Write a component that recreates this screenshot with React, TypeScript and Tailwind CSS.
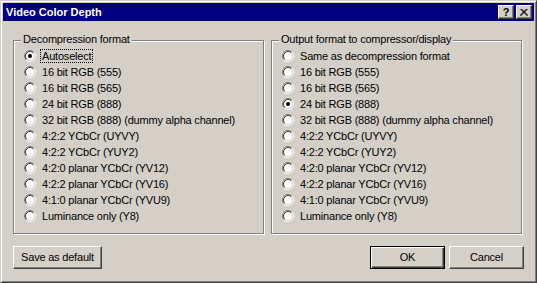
const decompression = [
  "Autoselect",
  "16 bit RGB (555)",
  "16 bit RGB (565)",
  "24 bit RGB (888)",
  "32 bit RGB (888) (dummy alpha channel)",
  "4:2:2 YCbCr (UYVY)",
  "4:2:2 YCbCr (YUY2)",
  "4:2:0 planar YCbCr (YV12)",
  "4:2:2 planar YCbCr (YV16)",
  "4:1:0 planar YCbCr (YVU9)",
  "Luminance only (Y8)",
];

const output = ["Same as decompression format", ...decompression.slice(1)];

// classic 12x12 radio button
const Radio = ({ checked }: { checked: boolean }) => (
  <svg width="12" height="12" viewBox="0 0 12 12" className="shrink-0">
    <circle cx="6" cy="6" r="4.5" fill="#fff" />
    <path d="M2.11 9.89 A5.5 5.5 0 0 1 9.89 2.11" fill="none" stroke="#808080" strokeWidth="1" />
    <path d="M9.89 2.11 A5.5 5.5 0 0 1 2.11 9.89" fill="none" stroke="#fff" strokeWidth="1" />
    <path d="M2.82 9.18 A4.5 4.5 0 0 1 9.18 2.82" fill="none" stroke="#404040" strokeWidth="1" />
    <path d="M9.18 2.82 A4.5 4.5 0 0 1 2.82 9.18" fill="none" stroke="#d4d0c8" strokeWidth="1" />
    {checked && <circle cx="6" cy="6" r="2" fill="#000" />}
  </svg>
);

const Group = ({
  title,
  items,
  selected,
  focused,
}: {
  title: string;
  items: string[];
  selected: number;
  focused?: boolean;
}) => (
  <div className="relative w-[251px] h-[194px] border border-[#808080] shadow-[inset_1px_1px_0_#fff,1px_1px_0_#fff] pt-[7px] pl-[10px]">
    <span className="absolute left-[7px] top-[-8px] px-[2px] bg-[#d4d0c8] leading-[13px]">{title}</span>
    {items.map((label, i) => (
      <div key={label} className="flex items-center h-4">
        <Radio checked={i === selected} />
        <span
          className={
            "ml-[4px] px-[1px] leading-[12px] border " +
            (focused && i === selected ? "border-dotted border-black" : "border-transparent")
          }
        >
          {label}
        </span>
      </div>
    ))}
  </div>
);

const Button = ({ label, width, primary }: { label: string; width: string; primary?: boolean }) => (
  <div
    className={
      "h-[23px] flex items-center justify-center border " +
      width +
      " " +
      (primary
        ? "border-black shadow-[inset_1px_1px_0_#fff,inset_-1px_-1px_0_#404040,inset_-2px_-2px_0_#808080]"
        : "border-t-white border-l-white border-r-[#404040] border-b-[#404040] shadow-[inset_-1px_-1px_0_#808080]")
    }
  >
    {label}
  </div>
);

const CaptionButton = ({ children }: { children: React.ReactNode }) => (
  <div className="w-4 h-[14px] bg-[#d4d0c8] flex items-center justify-center border border-t-white border-l-white border-r-[#404040] border-b-[#404040] shadow-[inset_-1px_-1px_0_#808080]">
    {children}
  </div>
);

export default function App() {
  return (
    <div className="w-[537px] h-[283px] bg-[#d4d0c8] border border-t-[#d4d0c8] border-l-[#d4d0c8] border-r-[#404040] border-b-[#404040] shadow-[inset_1px_1px_0_#fff,inset_-1px_-1px_0_#808080] p-[2px] flex flex-col text-[11px] text-black font-['Liberation_Sans',Arial,sans-serif] tracking-[-0.2px]">
      <div className="h-[18px] bg-[#000080] flex items-center pl-[3px] pr-[2px]">
        <span className="text-white font-bold tracking-normal">Video Color Depth</span>
        <div className="ml-auto flex gap-[2px]">
          <CaptionButton>
            <span className="font-bold text-[11px] leading-none tracking-normal">?</span>
          </CaptionButton>
          <CaptionButton>
            <svg width="8" height="7" viewBox="0 0 8 7">
              <path d="M0.5 0 L7.5 7 M7.5 0 L0.5 7 M1.5 0 L8 6.5 M6.5 0 L0 6.5" stroke="#000" strokeWidth="1" fill="none" />
            </svg>
          </CaptionButton>
        </div>
      </div>
      <div className="flex-1 px-[10px] pt-[19px]">
        <div className="flex gap-[7px]">
          <Group title="Decompression format" items={decompression} selected={0} focused />
          <Group title="Output format to compressor/display" items={output} selected={3} />
        </div>
        <div className="flex mt-[12px]">
          <Button label="Save as default" width="w-[89px]" />
          <div className="ml-auto flex gap-[4px]">
            <Button label="OK" width="w-[75px]" primary />
            <Button label="Cancel" width="w-[75px]" />
          </div>
        </div>
      </div>
    </div>
  );
}
